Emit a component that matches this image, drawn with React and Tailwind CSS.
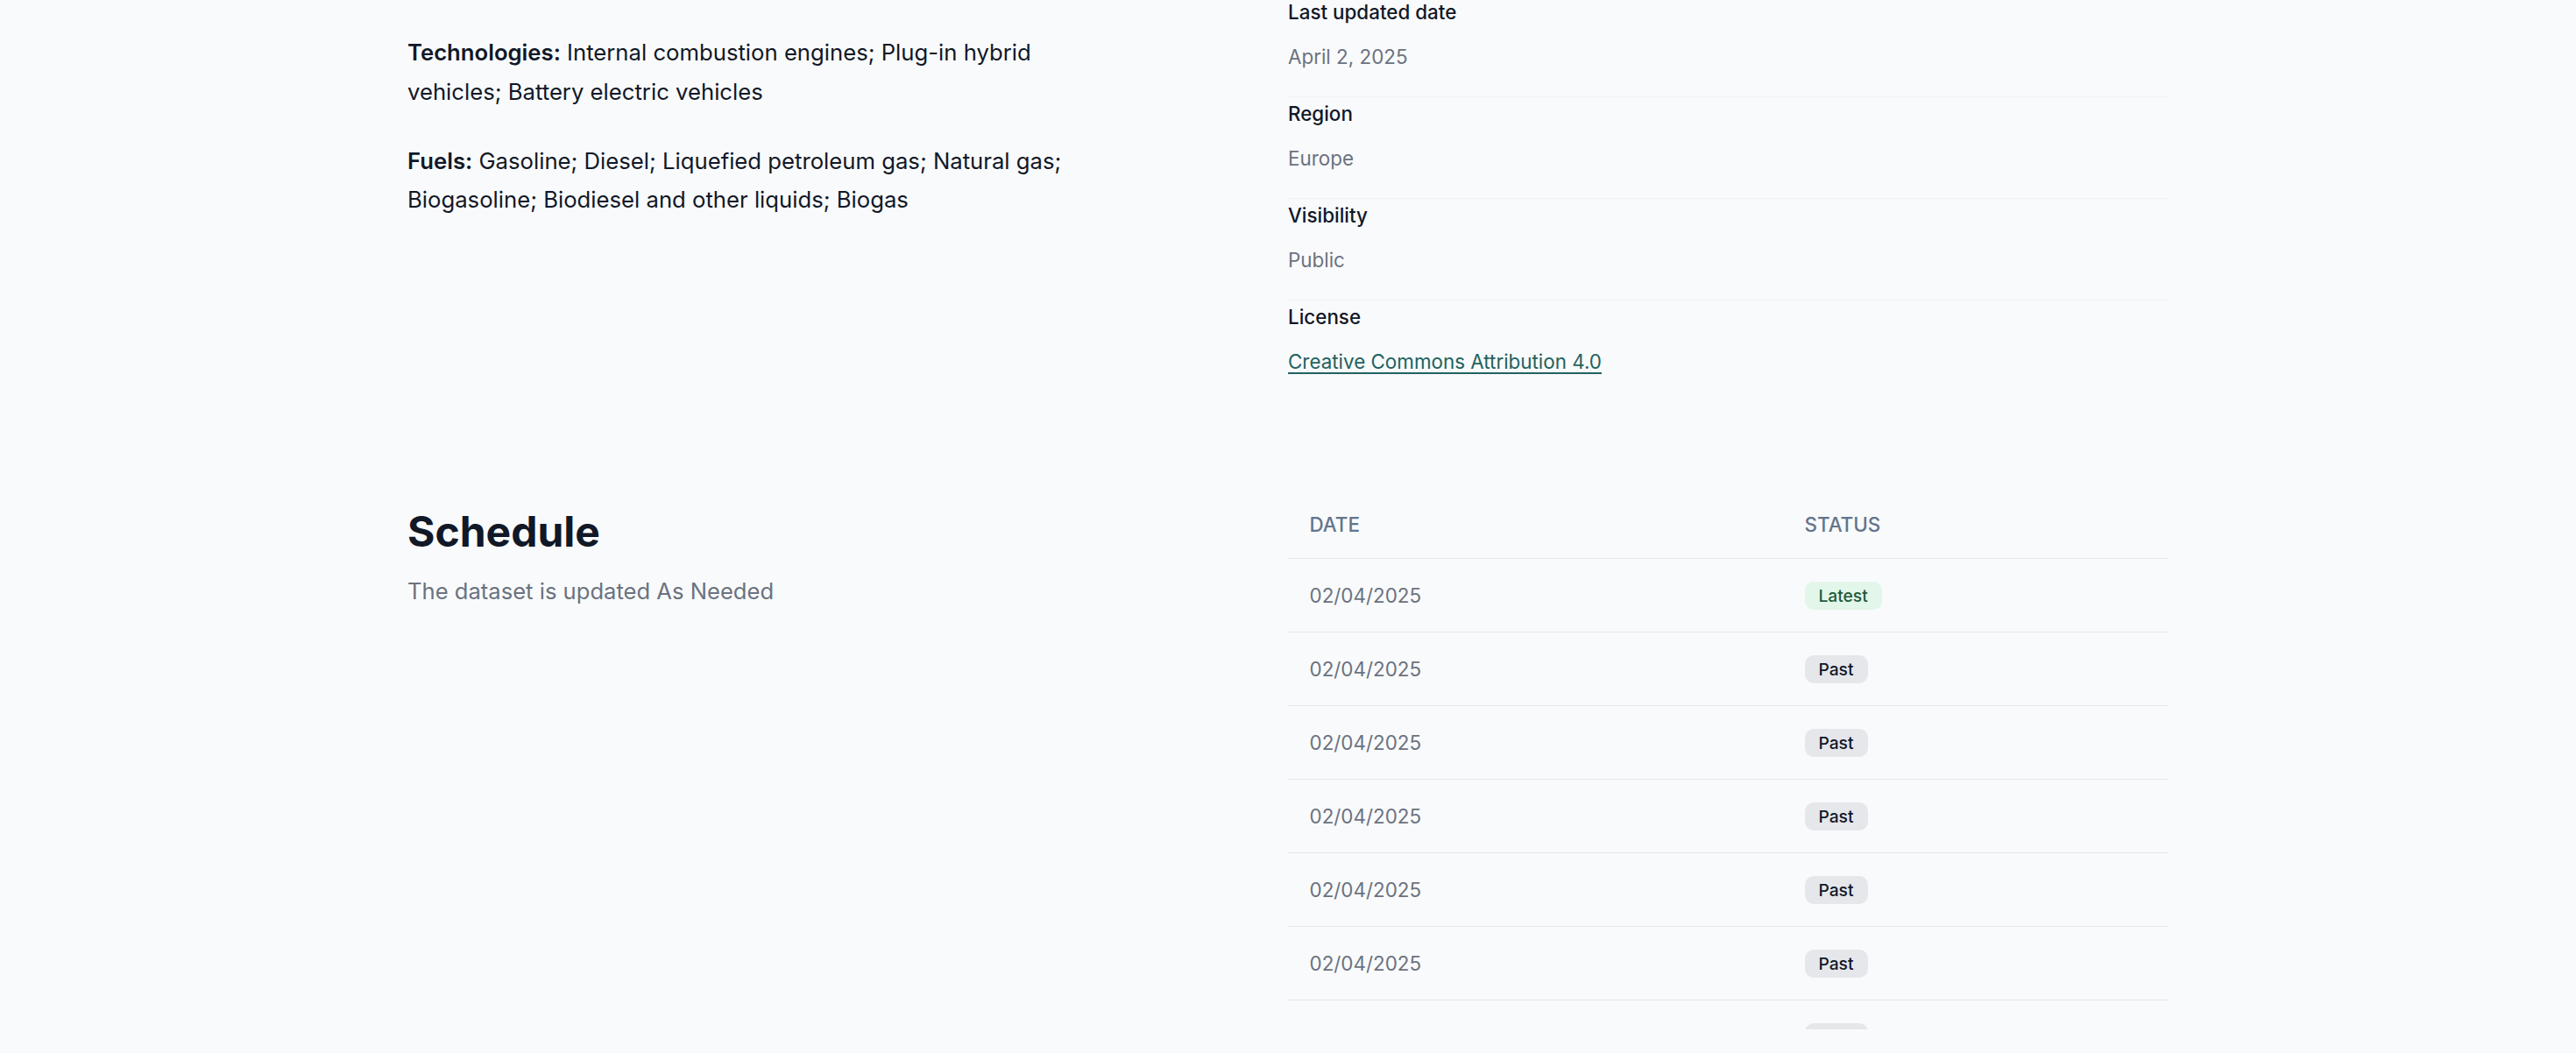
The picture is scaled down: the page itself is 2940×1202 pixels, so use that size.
import React from "react";

const meta = [
  { label: "Last updated date", value: "April 2, 2025" },
  { label: "Region", value: "Europe" },
  { label: "Visibility", value: "Public" },
  { label: "License", value: "Creative Commons Attribution 4.0", link: true },
];

const rows = [
  { date: "02/04/2025", status: "Latest" },
  { date: "02/04/2025", status: "Past" },
  { date: "02/04/2025", status: "Past" },
  { date: "02/04/2025", status: "Past" },
  { date: "02/04/2025", status: "Past" },
  { date: "02/04/2025", status: "Past" },
  { date: "02/04/2025", status: "Past" },
  { date: "02/04/2025", status: "Past" },
];

function Badge({ status }) {
  if (status === "Latest") {
    return (
      <span className="block w-fit rounded-[10px] bg-[#e2f6ea] px-[16px] py-[3px] text-[19.2px] leading-[26px] font-medium text-[#1e5b3c]">
        Latest
      </span>
    );
  }
  return (
    <span className="block w-fit rounded-[10px] bg-[#e5e7eb] px-[16px] py-[3px] text-[19.2px] leading-[26px] font-medium text-[#111827]">
      Past
    </span>
  );
}

export default function App() {
  return (
    <div className="h-[1202px] overflow-hidden bg-[#f9fafb] font-['Inter','Noto_Sans',sans-serif] text-[#111827]">
      <div className="mx-auto w-[2010px] -mt-[5px]">
        <section className="grid grid-cols-2">
          <div className="pt-[43px] max-w-[784px] text-[25.7px] leading-[44.5px] text-[#111827]">
            <p className="mb-[34.5px]">
              <strong className="font-semibold">Technologies:</strong> Internal
              combustion engines; Plug-in hybrid vehicles; Battery electric
              vehicles
            </p>
            <p>
              <strong className="font-semibold">Fuels:</strong> Gasoline; Diesel;
              Liquefied petroleum gas; Natural gas; Biogasoline; Biodiesel and
              other liquids; Biogas
            </p>
          </div>
          <dl>
            {meta.map((m, i) => (
              <div
                key={m.label}
                className={
                  i < meta.length - 1
                    ? "border-b border-[#f0f1f3] pt-[1px] pb-[28px]"
                    : "pt-[1px]"
                }
              >
                <dt className="text-[22.4px] leading-[35px] font-medium text-[#111827]">
                  {m.label}
                </dt>
                <dd className="mt-[16px] text-[22.4px] leading-[35px] text-[#6b7280]">
                  {m.link ? (
                    <a
                      href="#"
                      className="text-[#22625f] underline underline-offset-[4px] decoration-[2px]"
                    >
                      {m.value}
                    </a>
                  ) : (
                    m.value
                  )}
                </dd>
              </div>
            ))}
          </dl>
        </section>

        <section className="mt-[130px] grid grid-cols-2">
          <div className="pt-[15px]">
            <h2 className="text-[48px] leading-[63px] font-bold text-[#111827]">
              Schedule
            </h2>
            <p className="mt-[16px] text-[25.6px] leading-[42px] text-[#6b7280]">
              The dataset is updated As Needed
            </p>
          </div>
          <div className="h-[615px] overflow-hidden">
            <table className="w-full border-collapse text-left">
              <thead>
                <tr className="border-b border-[#e5e7eb]">
                  <th className="w-[565px] px-[24.5px] py-[21px] text-[22.4px] leading-[35px] font-medium uppercase text-[#64748b]">
                    Date
                  </th>
                  <th className="px-[24.5px] py-[21px] text-[22.4px] leading-[35px] font-medium uppercase text-[#64748b]">
                    Status
                  </th>
                </tr>
              </thead>
              <tbody>
                {rows.map((r, i) => (
                  <tr key={i} className="border-b border-[#e5e7eb]">
                    <td className="px-[24.5px] py-[24px] text-[22.4px] leading-[35px] text-[#6b7280] align-middle">
                      {r.date}
                    </td>
                    <td className="px-[24.5px] py-[25.5px] align-middle">
                      <Badge status={r.status} />
                    </td>
                  </tr>
                ))}
              </tbody>
            </table>
          </div>
        </section>
      </div>
    </div>
  );
}
